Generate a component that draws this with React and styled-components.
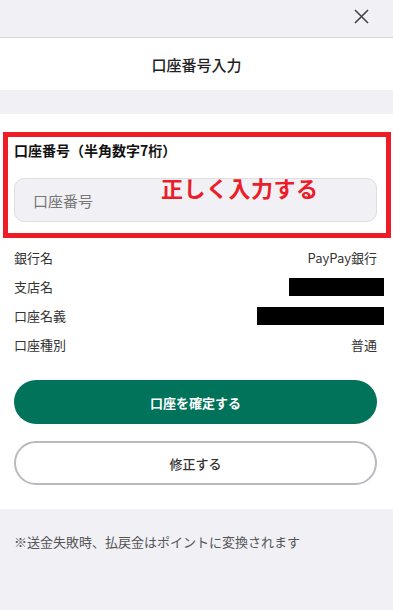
import React from 'react'
import styled, { createGlobalStyle } from 'styled-components'

const GlobalStyle = createGlobalStyle`
  html, body {
    margin: 0;
    padding: 0;
    background: #f0f0f5;
  }
  body {
    font-family: "Noto Sans CJK JP", "Noto Sans", sans-serif;
    color: #222;
  }
`

const rows = [
  { label: '銀行名', value: 'PayPay銀行' },
  { label: '支店名', redact: 95 },
  { label: '口座名義', redact: 127 },
  { label: '口座種別', value: '普通' }
]

const App = () => (
  <Page>
    <GlobalStyle />
    <TopBar>
      <CloseButton aria-label="閉じる">
        <svg width="15" height="15" viewBox="0 0 15 15">
          <path d="M1 1 L14 14 M14 1 L1 14" stroke="#444" strokeWidth="1.6" fill="none" />
        </svg>
      </CloseButton>
    </TopBar>
    <TitleBar>口座番号入力</TitleBar>
    <Spacer />
    <Card>
      <Field>
        <FieldLabel>口座番号（半角数字7桁）</FieldLabel>
        <Input placeholder="口座番号" />
        <Annotation>
          <Note>正しく入力する</Note>
        </Annotation>
      </Field>
      <InfoList>
        {rows.map(r => (
          <InfoRow key={r.label}>
            <span>{r.label}</span>
            {r.redact ? <Redacted $w={r.redact} /> : <span>{r.value}</span>}
          </InfoRow>
        ))}
      </InfoList>
      <Buttons>
        <Button $primary>口座を確定する</Button>
        <Button>修正する</Button>
      </Buttons>
    </Card>
    <Footer>※送金失敗時、払戻金はポイントに変換されます</Footer>
  </Page>
)

const Page = styled.div`
  min-height: 610px;
  display: flex;
  flex-direction: column;
  background: #f0f0f5;
`

const TopBar = styled.header`
  height: 37px;
  border-bottom: 1px solid #d6d6da;
  display: flex;
  justify-content: flex-end;
  align-items: center;
  padding-right: 24px;
`

const CloseButton = styled.button`
  border: none;
  background: none;
  padding: 0;
  display: flex;
  margin-top: -5px;
`

const TitleBar = styled.h1`
  margin: 0;
  height: 52px;
  background: #fff;
  display: flex;
  align-items: center;
  justify-content: center;
  font-size: 15px;
  font-weight: 500;
  color: #222;
`

const Spacer = styled.div`
  height: 24px;
`

const Card = styled.section`
  background: #fff;
  padding: 26px 16px 24px 14px;
`

const Field = styled.div`
  position: relative;
  display: flex;
  flex-direction: column;
`

const FieldLabel = styled.label`
  font-size: 14px;
  font-weight: 700;
  line-height: 20px;
  color: #111;
`

const Input = styled.input`
  margin-top: 18px;
  height: 44px;
  box-sizing: border-box;
  width: 100%;
  border: 1.5px solid #dedee3;
  border-radius: 10px;
  background: #f0f0f5;
  padding: 0 18px;
  font-family: inherit;
  font-size: 15px;
  outline: none;
  &::placeholder {
    color: #777;
  }
`

const Annotation = styled.div`
  position: absolute;
  left: -11px;
  right: -14px;
  top: -8px;
  bottom: -16px;
  border: 5px solid #ee1c25;
  pointer-events: none;
`

const Note = styled.span`
  position: absolute;
  left: 153px;
  top: 34px;
  font-size: 22px;
  font-weight: 700;
  color: #ec1c28;
  letter-spacing: 0.5px;
`

const InfoList = styled.div`
  margin-top: 21px;
  display: flex;
  flex-direction: column;
`

const InfoRow = styled.div`
  height: 29px;
  display: flex;
  align-items: center;
  justify-content: space-between;
  font-size: 13px;
  color: #333;
`

const Redacted = styled.span`
  width: ${p => p.$w}px;
  height: 18px;
  background: #000;
  margin-right: -7px;
`

const Buttons = styled.div`
  margin-top: 21px;
  display: flex;
  flex-direction: column;
  gap: 17px;
`

const Button = styled.button`
  height: 44px;
  border-radius: 22px;
  font-family: inherit;
  font-size: 13px;
  font-weight: ${p => (p.$primary ? 700 : 500)};
  color: ${p => (p.$primary ? '#fff' : '#333')};
  background: ${p => (p.$primary ? '#00735a' : '#fff')};
  border: ${p => (p.$primary ? 'none' : '2px solid #b9b9c0')};
`

const Footer = styled.footer`
  flex: 1;
  padding: 23px 14px;
  font-size: 13px;
  color: #555;
`

export default App
